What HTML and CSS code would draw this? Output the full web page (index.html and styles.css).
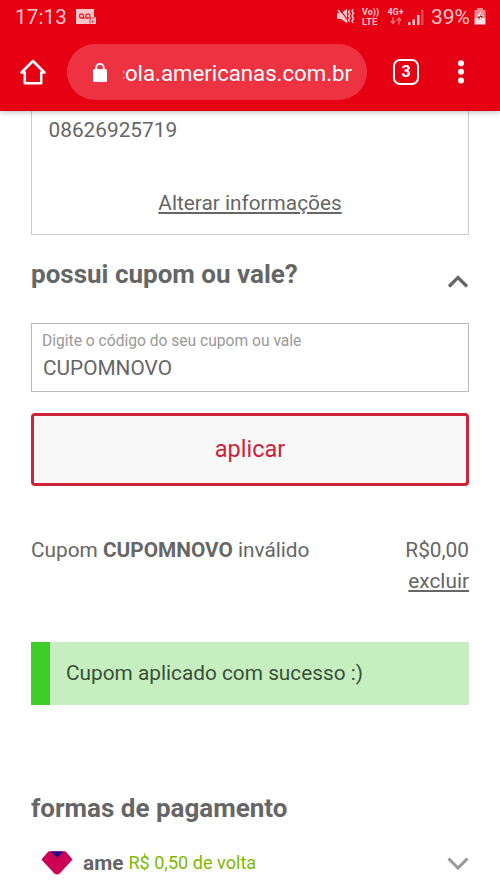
FILE: index.html
```html
<!DOCTYPE html>
<html lang="pt-BR">
<head>
<meta charset="utf-8">
<title>americanas</title>
<link rel="stylesheet" href="styles.css">
</head>
<body>
<header class="browser">
  <div class="status">
    <span class="clock">17:13</span>
    <svg class="voicemail" width="20" height="16" viewBox="0 0 20 16"><path fill="#ffc4c6" d="M0 0h18v8h2v7H0z"/><g fill="none" stroke="#d9303d" stroke-width="1.3"><circle cx="5.500" cy="7" r="2"/><circle cx="12" cy="7" r="2"/><path d="M5 9h7"/></g><path fill="#d9303d" d="M13.500 8.500h5v1h-4v5h-1z"/><path stroke="#d9303d" stroke-width="1.200" d="M16.800 11v3"/></svg>
    <div class="indicators">
      <svg class="mute" width="18" height="17" viewBox="0 0 18 17"><path fill="#ffc4c6" d="M0 5h4l6-4v14l-6-4H0z"/><path stroke="#e60014" stroke-width="1.2" d="M2.500 1l9 12"/><path stroke="#ffc4c6" stroke-width="1.5" d="M1 2l9 12"/><path fill="none" stroke="#ffc4c6" stroke-width="1.5" d="M12.500 2l-1 2 1.500 2-1.500 2 1.500 2-1.500 2 1 2M16 1l-1 2 1.500 2.500-1.500 2.500 1.500 2.500-1.500 2.500 1 2"/></svg>
      <div class="volte"><span>Vo))</span><span class="lte">LTE</span></div>
      <div class="net"><span>4G+</span><svg width="12" height="8" viewBox="0 0 12 8"><path fill="none" stroke="#f47179" stroke-width="1.400" d="M3 0v6M.8 4L3 6.500 5.200 4M9 7.500V1M6.800 3.500L9 1l2.200 2.500"/></svg></div>
      <svg class="signal" width="16" height="16" viewBox="0 0 16 16"><g fill="#ffc4c6"><path d="M0 13h2.500v3H0zM4.500 10.500H7V16H4.500zM9 6h2.500v10H9z"/><path opacity=".35" d="M13 1h2.500v15H13z"/></g></svg>
      <span class="percent">39%</span>
      <svg class="battery" width="12" height="17" viewBox="0 0 12 17"><path fill="#f6868b" d="M3 0h6v2h2.500v8H.5V2H3z"/><path fill="#ffdcdc" d="M.5 10h11v6.500H.5z"/><path fill="#fff" d="M7.500 3L2.500 9h3l-1 5 5-6.500h-3z"/><path fill="#8e2029" d="M3 8.500h3L5 13l-.5-3zM7 5.500L6.500 8H9L6.500 11l.5-2H5z"/></svg>
    </div>
  </div>
  <div class="toolbar">
    <svg class="home" width="26" height="26" viewBox="0 0 26 26"><path fill="none" stroke="#fff" stroke-width="2.500" stroke-linejoin="round" d="M1.500 13.500L13 2l11.500 11.500h-3.300V24.300H4.800V13.500z"/></svg>
    <div class="address">
      <svg width="14" height="19" viewBox="0 0 14 19"><rect y="6" width="14" height="13" rx="1.500" fill="#fff"/><path fill="none" stroke="#fff" stroke-width="1.800" d="M3.300 7V4.600a3.700 3.700 0 0 1 7.400 0V7"/></svg>
      <div class="url"><span>cola.americanas.com.br</span></div>
    </div>
    <div class="tabs">3</div>
    <svg class="menu" width="6" height="24" viewBox="0 0 6 24"><g fill="#fff"><circle cx="3" cy="3.200" r="3"/><circle cx="3" cy="11.800" r="3"/><circle cx="3" cy="20.400" r="3"/></g></svg>
  </div>
</header>
<main>
  <section class="info">
    <span class="doc">08626925719</span>
    <a class="edit">Alterar informações</a>
  </section>
  <div class="heading">
    <h2 class="coupon-title">possui cupom ou vale?</h2>
    <svg class="up" width="22" height="13" viewBox="0 0 22 13"><path fill="none" stroke="#666" stroke-width="3.400" d="M2 11.500L11 2.600l9 8.900"/></svg>
  </div>
  <div class="field">
    <label>Digite o código do seu cupom ou vale</label>
    <span class="value">CUPOMNOVO</span>
  </div>
  <button class="apply">aplicar</button>
  <div class="result">
    <span class="result-name">Cupom <b>CUPOMNOVO</b> inválido</span>
    <div class="amount"><span>R$0,00</span><a>excluir</a></div>
  </div>
  <div class="success"><span>Cupom aplicado com sucesso :)</span></div>
  <h2 class="pay-title">formas de pagamento</h2>
  <div class="ame">
    <svg class="gem" width="32" height="24" viewBox="0 0 32 24"><path fill="#cc0057" stroke="#cc0057" stroke-width="2.500" stroke-linejoin="round" d="M8 1.500h16L30 8.500 18 21.500q-2 1.500-4 0L2 8.500z"/><path fill="#1a0a86" d="M9.500 .5h13L16 6.500z"/></svg>
    <b>ame</b><span class="cashback">R$ 0,50 de volta</span>
    <svg class="down" width="22" height="13" viewBox="0 0 22 13"><path fill="none" stroke="#999" stroke-width="3" d="M1.500 1.500L11 11l9.500-9.500"/></svg>
  </div>
</main>
</body>
</html>
```
FILE: styles.css
```css
* { box-sizing: border-box; }
body { margin: 0; height: 889px; overflow: hidden; background: #fff; color: #666; font: 20.8px/24px Roboto, sans-serif; }
svg { display: block; flex: none; }
h2 { margin: 0; font-size: 26px; line-height: 30px; font-weight: 700; white-space: nowrap; }
.browser { position: relative; height: 111px; background: #e60014; box-shadow: 0 1px 6px rgba(0,0,0,.28); }
.status { display: flex; height: 33px; padding: 0 14px 0 15px; align-items: center; color: #ffc4c6; }
.clock { font-size: 20.5px; letter-spacing: .2px; }
.voicemail { margin-left: 9px; }
.indicators { display: flex; align-items: center; margin-left: auto; }
.volte { display: flex; flex-direction: column; margin-left: 7px; width: 17px; font-size: 9px; line-height: 9px; font-weight: 700; }
.lte { font-size: 9.500px; }
.net { display: flex; flex-direction: column; align-items: center; gap: 1px; margin-left: 8px; width: 17px; font-size: 9px; line-height: 8px; font-weight: 700; }
.signal { margin-left: 4px; }
.percent { margin-left: 7px; font-size: 21px; }
.battery { margin-left: 4px; }
.toolbar { display: flex; align-items: center; height: 78px; padding: 0 36px 0 20px; }
.address { display: flex; align-items: center; width: 300px; height: 56px; margin-left: 21px; padding-left: 26px; border-radius: 28px; background: #ed3342; color: #fff; }
.url { display: flex; justify-content: flex-end; width: 229px; margin: 2px 0 0 16px; overflow: hidden; font-size: 22.2px; line-height: 28px; white-space: nowrap; }
.tabs { width: 26px; height: 26px; margin-left: 26px; border: 2.500px solid #fff; border-radius: 7px; color: #fff; font-size: 16px; line-height: 21px; font-weight: 700; text-align: center; }
.menu { margin-left: 39px; }
main { padding: 0 31px; }
.info { display: flex; flex-direction: column; height: 124px; padding: 7px 16px 0; border: solid #ccc; border-width: 0 1.500px 1.500px; }
.doc { margin-left: .5px; }
.edit { align-self: center; margin-top: 49px; }
.edit, .amount a { text-decoration: underline; text-underline-offset: 2px; text-decoration-thickness: 1.500px; }
.heading { display: flex; justify-content: space-between; height: 88px; padding-top: 24px; }
.up { margin-top: 16px; }
.field { display: flex; flex-direction: column; height: 69px; padding: 8px 10px; border: 1px solid #bbb; }
.field label { color: #999; font-size: 15.600px; line-height: 18px; }
.value { margin: 6px 0 0 1px; }
.apply { display: block; width: 100%; height: 73px; margin-top: 21px; padding: 0 0 2px; border: 3px solid #cd2439; border-radius: 4px; background: #f8f8f8; color: #cf2039; font: 23.500px/28px Roboto, sans-serif; }
.result { display: flex; justify-content: space-between; margin-top: 52px; }
.amount { display: flex; flex-direction: column; gap: 7px; text-align: right; }
.success { display: flex; align-items: center; height: 63px; margin-top: 49px; padding: 0 0 2px 16px; border-left: 19px solid #3ece29; background: #c6efbf; color: #3a4f3a; }
.pay-title { margin-top: 88px; }
.ame { display: flex; align-items: center; margin-top: 28px; padding-left: 10px; }
.ame b { margin-left: 10px; }
.cashback { margin-left: 5px; color: #7cb900; font-size: 18.100px; }
.down { margin-left: auto; }
```
